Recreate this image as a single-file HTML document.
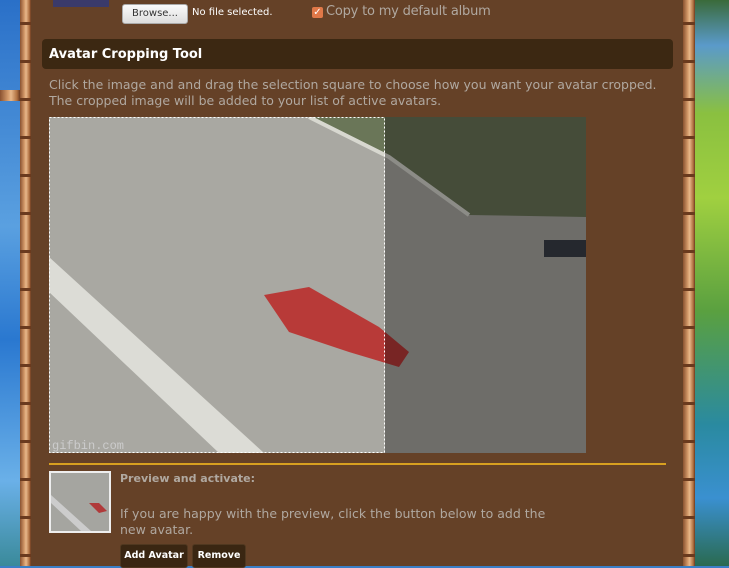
<!DOCTYPE html>
<html><head><style>
body{margin:0;width:729px;height:566px;overflow:hidden;position:relative;background:#3a7fc8;font-family:"DejaVu Sans","Liberation Sans",sans-serif}
.abs{position:absolute}
.bamboo{background:linear-gradient(90deg,#8a5230,#d49a6a 40%,#e8b88a 55%,#b07040 85%,#6a3a20);}
.joint{position:absolute;left:0;right:0;height:3px;background:#6a3a1e}
</style></head><body>
<div class="abs" style="left:0;top:0;width:20px;height:566px;background:linear-gradient(180deg,#2a70c8,#5aa0e0 40%,#2a78d0 60%,#6ab0e8 85%,#3a8a9a)"></div>
<div class="abs bamboo" style="left:0;top:90px;width:20px;height:11px"></div>
<div class="abs bamboo" style="left:20px;top:0;width:11px;height:566px">
<div class="joint" style="top:22px"></div><div class="joint" style="top:60px"></div><div class="joint" style="top:98px"></div><div class="joint" style="top:136px"></div><div class="joint" style="top:174px"></div><div class="joint" style="top:212px"></div><div class="joint" style="top:250px"></div><div class="joint" style="top:288px"></div><div class="joint" style="top:326px"></div><div class="joint" style="top:364px"></div><div class="joint" style="top:402px"></div><div class="joint" style="top:440px"></div><div class="joint" style="top:478px"></div><div class="joint" style="top:516px"></div><div class="joint" style="top:554px"></div></div>
<div class="abs" style="left:31px;top:0;width:652px;height:566px;background:#654127"></div>
<div class="abs bamboo" style="left:683px;top:0;width:12px;height:566px">
<div class="joint" style="top:22px"></div><div class="joint" style="top:60px"></div><div class="joint" style="top:98px"></div><div class="joint" style="top:136px"></div><div class="joint" style="top:174px"></div><div class="joint" style="top:212px"></div><div class="joint" style="top:250px"></div><div class="joint" style="top:288px"></div><div class="joint" style="top:326px"></div><div class="joint" style="top:364px"></div><div class="joint" style="top:402px"></div><div class="joint" style="top:440px"></div><div class="joint" style="top:478px"></div><div class="joint" style="top:516px"></div><div class="joint" style="top:554px"></div></div>
<div class="abs" style="left:695px;top:0;width:34px;height:566px;background:linear-gradient(180deg,#3a6a3a,#5a9aca 8%,#8ac040 20%,#a0d040 35%,#5aa040 55%,#2a8aa0 75%,#3a90d0 88%,#2a6a50)"></div>

<div class="abs" style="left:53px;top:0;width:56px;height:7px;background:#3a3a6a"></div>
<div class="abs" style="left:122px;top:4px;width:64px;height:18px;background:linear-gradient(#fafafa,#ddd);border:1px solid #aaa;border-radius:3px;font-size:10px;line-height:18px;text-align:center;color:#333">Browse...</div>
<div class="abs" style="left:192px;top:7px;font-size:10px;color:#fff">No file selected.</div>
<div class="abs" style="left:312px;top:7px;width:11px;height:11px;background:#e07848;border-radius:2px;color:#fff;font-size:10px;line-height:11px;text-align:center">✓</div>
<div class="abs" style="left:326px;top:4px;font-size:13px;color:#b0a8a0;letter-spacing:-0.2px">Copy to my default album</div>

<div class="abs" style="left:42px;top:39px;width:631px;height:30px;background:#3c2812;border-radius:4px"></div>
<div class="abs" style="left:49px;top:47px;font-size:13px;font-weight:bold;color:#fff">Avatar Cropping Tool</div>
<div class="abs" style="left:49px;top:77px;font-size:12.5px;line-height:16px;color:#b0a8a0;white-space:nowrap">Click the image and and drag the selection square to choose how you want your avatar cropped.<br>The cropped image will be added to your list of active avatars.</div>

<svg class="abs" style="left:49px;top:117px" width="537" height="336" viewBox="0 0 537 336">
<rect width="537" height="336" fill="#a9a8a2"/>
<path d="M260 0 L537 0 L537 100 L420 98 L340 40 Z" fill="#6a7658"/>
<path d="M260 0 L340 40 L420 98" stroke="#d8d8d0" stroke-width="4" fill="none"/>
<rect x="495" y="123" width="42" height="17" fill="#3a3e48"/>
<path d="M0 140 L0 175 L170 336 L215 336 Z" fill="#dcdcd6"/>
<path d="M215 178 L260 170 L330 210 L360 235 L350 250 L300 235 L240 215 Z" fill="#b83a38"/>
<text x="3" y="332" font-size="12" fill="#ccc" font-family="Liberation Mono,monospace">gifbin.com</text>
<rect x="336" y="0" width="201" height="336" fill="#000" opacity="0.35"/>
<rect x="0.5" y="0.5" width="335" height="335" fill="none" stroke="#fff" stroke-dasharray="2,2"/>
</svg>

<div class="abs" style="left:49px;top:463px;width:617px;height:2px;background:#d8a020"></div>
<svg class="abs" style="left:49px;top:471px" width="62" height="62" viewBox="0 0 62 62">
<rect x="1" y="1" width="60" height="60" fill="#a5a5a0" stroke="#eee" stroke-width="2"/>
<path d="M2 24 L2 32 L32 60 L42 60 Z" fill="#ccc"/>
<path d="M40 32 L50 32 L58 40 L50 42 Z" fill="#b03a3a"/>
</svg>
<div class="abs" style="left:120px;top:472px;font-size:11px;font-weight:bold;color:#b0a8a0">Preview and activate:</div>
<div class="abs" style="left:120px;top:506px;font-size:12.5px;line-height:16px;color:#b0a8a0">If you are happy with the preview, click the button below to add the<br>new avatar.</div>
<div class="abs" style="left:120px;top:544px;width:66px;height:22px;background:#3a2612;border:1px solid #503820;border-radius:3px;color:#fff;font-size:9.5px;font-weight:bold;line-height:22px;text-align:center">Add Avatar</div>
<div class="abs" style="left:192px;top:544px;width:52px;height:22px;background:#3a2612;border:1px solid #503820;border-radius:3px;color:#fff;font-size:9.5px;font-weight:bold;line-height:22px;text-align:center">Remove</div>
</body></html>
